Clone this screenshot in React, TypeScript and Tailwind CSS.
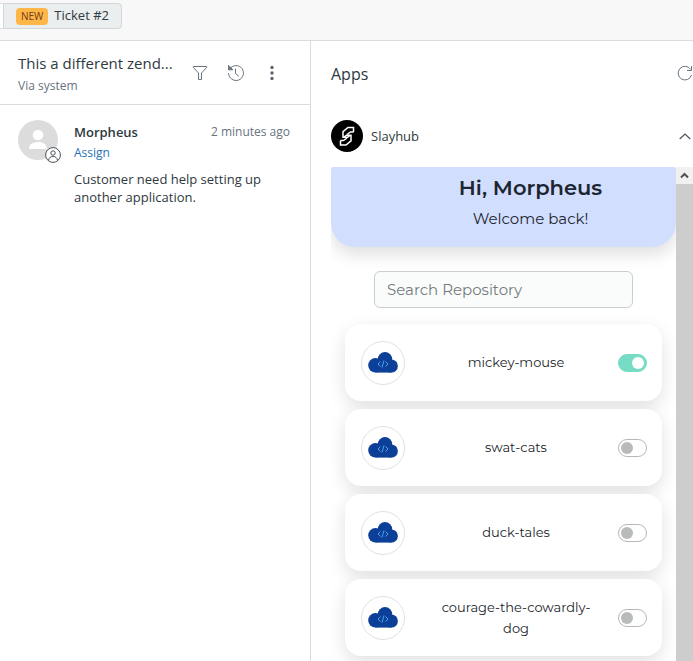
import { useState } from "react";

const repositories = [
  { name: "mickey-mouse", enabled: true },
  { name: "swat-cats", enabled: false },
  { name: "duck-tales", enabled: false },
  { name: "courage-the-cowardly-dog", enabled: false },
];

function FilterIcon() {
  return (
    <svg width="16" height="16" viewBox="0 0 16 16" fill="none" stroke="#68737d" strokeLinejoin="round" aria-hidden="true">
      <path d="M1.500 1.500h13c.4 0 .5.4.3.7L9.500 8v6.500h-3V8L1.200 2.200c-.3-.3-.1-.7.3-.7z" />
    </svg>
  );
}

function HistoryIcon() {
  return (
    <svg width="18" height="18" viewBox="0 0 18 18" fill="none" stroke="#68737d" strokeLinecap="round" aria-hidden="true">
      <path d="M3 4.500A7.500 7.500 0 1 1 1.500 9.500" />
      <path d="M1.500 1.800v4h4z" fill="#68737d" strokeLinejoin="round" />
      <path d="M8.500 5v4.500l3 2.500" />
    </svg>
  );
}

function DotsIcon() {
  return (
    <svg width="16" height="16" viewBox="0 0 16 16" fill="#5c6670" aria-hidden="true">
      <circle cx="8" cy="2.500" r="1.700" />
      <circle cx="8" cy="8" r="1.700" />
      <circle cx="8" cy="13.500" r="1.700" />
    </svg>
  );
}

function TicketTabs() {
  return (
    <nav className="flex h-[41px] items-start border-b border-[#d8dcde] bg-[#f8f8f8] pt-[3px]">
      <div className="h-[26px] w-[3px] border-y border-[#d8dcde] bg-white" />
      <button className="flex h-[26px] items-center gap-[6px] rounded-r border border-[#d3d6d8] bg-[#ebeeee] px-3 text-[13px] text-[#2f3941]">
        <span className="flex h-[17px] items-center rounded bg-[#ffb648] px-[5px] text-[10px] text-[#703b15]">NEW</span>
        Ticket #2
      </button>
    </nav>
  );
}

function Conversation() {
  return (
    <section className="w-[311px] shrink-0 border-r border-[#d8dcde]">
      <header className="flex h-16 items-center border-b border-[#d8dcde] pr-[29px] pl-[18px]">
        <div className="min-w-0 flex-1">
          <h1 className="text-[15px] leading-6 whitespace-nowrap text-[#2f3941]">This a different zend...</h1>
          <p className="mt-[2px] text-xs leading-[18px] text-[#68737d]">Via system</p>
        </div>
        <div className="flex items-center gap-[18px]">
          <button aria-label="Filter" className="flex w-[18px] justify-center"><FilterIcon /></button>
          <button aria-label="History" className="flex w-[18px] justify-center"><HistoryIcon /></button>
          <button aria-label="More options" className="flex w-[18px] justify-center"><DotsIcon /></button>
        </div>
      </header>
      <article className="flex gap-4 pt-[15px] pr-5 pl-[18px]">
        <div className="relative h-10 w-10 shrink-0">
          <svg width="40" height="40" viewBox="0 0 40 40" aria-hidden="true">
            <circle cx="20" cy="20" r="20" fill="#dcdcdc" />
            <circle cx="20" cy="15" r="5.300" fill="#fff" />
            <path d="M11 29c0-5 4-7 9-7s9 2 9 7z" fill="#fff" />
          </svg>
          <svg className="absolute -right-[3px] -bottom-[3px]" width="16" height="16" viewBox="0 0 16 16" fill="#fff" stroke="#49545c" aria-hidden="true">
            <circle cx="8" cy="8" r="7.400" />
            <circle cx="8" cy="6" r="2.200" />
            <path d="M3.500 13.500C4 10.500 5.500 9.500 8 9.500s4 1 4.500 4" fill="none" />
          </svg>
        </div>
        <div className="min-w-0 flex-1 text-[#2f3941]">
          <div className="flex items-center justify-between leading-6">
            <h2 className="text-[13px] leading-6 font-semibold">Morpheus</h2>
            <time className="text-xs leading-6 text-[#68737d]">2 minutes ago</time>
          </div>
          <a href="#assign" className="block text-xs leading-[18px] text-[#1f73b7]">Assign</a>
          <p className="mt-2 text-[13px] leading-[18px]">Customer need help setting up another application.</p>
        </div>
      </article>
    </section>
  );
}

function SlayhubLogo() {
  return (
    <svg width="32" height="32" viewBox="0 0 32 32" fill="none" aria-hidden="true">
      <circle cx="16" cy="16" r="16" fill="#000" />
      <g stroke="#fff" strokeWidth="1.500" strokeLinejoin="miter">
        <path d="M22.500 12V7.500h-5.500L12 11.700v5.600h4.500l2.500-2" />
        <path d="M22.500 12h-3L16 14.500" />
        <path d="M9.500 20.500V25H15l5-4.200v-5.600h-4.500l-2.500 2" />
        <path d="M9.500 20.500h3L16 18" />
      </g>
    </svg>
  );
}

function CloudBadge() {
  return (
    <span className="flex h-[44px] w-[44px] shrink-0 items-center justify-center rounded-full border border-[#dfe2e3]">
      <svg width="30" height="21" viewBox="0 0 30 21" fill="none" aria-hidden="true">
        <g fill="#0c3f97">
          <circle cx="17" cy="7.300" r="7.200" />
          <circle cx="7.500" cy="13.300" r="7.300" />
          <circle cx="23.300" cy="14" r="6.600" />
          <path d="M7.500 9h16v11.600h-16z" />
        </g>
        <path d="m12.500 9.500-2.500 2.500 2.500 2.500M17.500 9.500l2.500 2.500-2.500 2.500M16 8.500l-2 7" stroke="#4ba3ec" />
      </svg>
    </span>
  );
}

function RepositoryCard({ name, enabled }: { name: string; enabled: boolean }) {
  const [checked, setChecked] = useState(enabled);
  return (
    <li>
      <label className="flex h-[77px] items-center rounded-2xl bg-white pr-[15px] pl-4 shadow-[0_6px_18px_rgba(0,0,0,0.12)]">
        <CloudBadge />
        <span className="flex-1" />
        <span className="mr-[22px] w-40 text-center text-[13px] leading-[21px] text-[#212529]">{name}</span>
        <input
          type="checkbox"
          role="switch"
          checked={checked}
          onChange={() => setChecked(!checked)}
          className="h-[18px] w-[29px] shrink-0 appearance-none rounded-full border border-[#b5b8b8] bg-white before:mt-[2px] before:ml-[2px] before:block before:h-3 before:w-3 before:rounded-full before:bg-[#b9bbbb] checked:border-[#76dcc3] checked:bg-[#76dcc3] checked:before:ml-[13px] checked:before:bg-white"
        />
      </label>
    </li>
  );
}

function SlayhubApp() {
  return (
    <div className="ml-5 flex min-h-0 flex-1 overflow-hidden">
      <div className="min-w-0 flex-1 overflow-hidden font-[Montserrat,Inter,sans-serif]">
        <header className="h-20 rounded-t-xs rounded-b-3xl bg-[#d2defe] pt-[9px] pl-[54px] text-center text-[#1c2530] shadow-[0_8px_16px_rgba(0,0,0,0.12)]">
          <h2 className="text-[21px] leading-6 font-semibold">Hi, Morpheus</h2>
          <p className="mt-[7px] text-[15px] leading-6">Welcome back!</p>
        </header>
        <div className="mt-6 mr-[43px] ml-[43px]">
          <input
            type="search"
            aria-label="Search Repository"
            placeholder="Search Repository"
            className="block h-[37px] w-full rounded-md border border-[#c9ced3] bg-[#fafcfc] px-3 text-[15px] placeholder:text-[#747b7c]"
          />
        </div>
        <ul className="mt-4 mr-[14px] ml-[14px] flex flex-col gap-2">
          {repositories.map((repository) => (
            <RepositoryCard key={repository.name} {...repository} />
          ))}
        </ul>
      </div>
      <div className="w-[17px] shrink-0 bg-[#cdcdcd]">
        <button aria-label="Scroll up" className="flex h-[17px] w-full items-center justify-center bg-[#f1f1f1]">
          <svg width="9" height="7" viewBox="0 0 9 7" fill="none" stroke="#505050" strokeWidth="2" aria-hidden="true">
            <path d="m1 5.500 3.500-3.500L8 5.500" />
          </svg>
        </button>
      </div>
    </div>
  );
}

function AppsPanel() {
  return (
    <aside className="flex min-w-0 flex-1 flex-col text-[#2f3941]">
      <header className="flex h-16 items-center justify-between pl-5">
        <h2 className="pt-[2px] text-base">Apps</h2>
        <button aria-label="Reload apps" className="flex h-4 w-4">
          <svg width="16" height="16" viewBox="0 0 16 16" fill="none" stroke="#68737d" aria-hidden="true">
            <path d="M14.500 10A6.800 6.800 0 1 1 13.700 4.500M14.500 1v4.500H10" />
          </svg>
        </button>
      </header>
      <div className="flex h-[62px] items-center pl-5">
        <SlayhubLogo />
        <h3 className="flex-1 pt-[2px] pl-2 text-[13px]">Slayhub</h3>
        <button aria-label="Collapse Slayhub" className="flex h-4 w-4 items-center justify-center">
          <svg width="12" height="7" viewBox="0 0 12 7" fill="none" stroke="#49545c" strokeWidth="1.200" aria-hidden="true">
            <path d="M.7 6 6 1l5.300 5" />
          </svg>
        </button>
      </div>
      <SlayhubApp />
    </aside>
  );
}

export default function App() {
  return (
    <div className="flex h-screen flex-col overflow-hidden bg-white font-['Segoe_UI','Open_Sans',sans-serif]">
      <TicketTabs />
      <main className="flex min-h-0 flex-1">
        <Conversation />
        <AppsPanel />
      </main>
    </div>
  );
}
